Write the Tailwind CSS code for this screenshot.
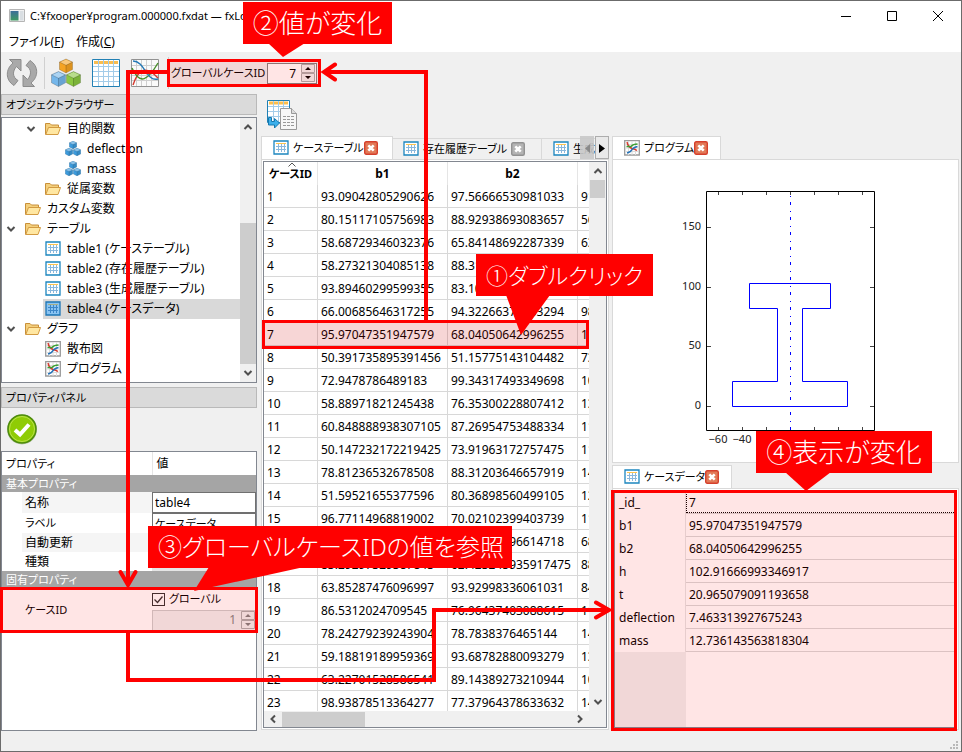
<!DOCTYPE html>
<html lang="ja">
<head>
    <meta charset="UTF-8">
    <meta name="viewport" content="width=device-width, initial-scale=1.0">
    <title>program.000000.fxdat</title>
    <script src="https://cdn.jsdelivr.net/npm/@tailwindcss/browser@4"></script>
</head>
<body class="bg-[#f0f0f0] text-black text-[12px] leading-5 font-['Noto_Sans','Noto_Sans_CJK_JP',sans-serif] [font-feature-settings:'palt'] whitespace-nowrap overflow-hidden">
    <!-- Icon sprites -->
    <svg class="hidden">
        <symbol id="i-folder" viewBox="0 0 16 16">
            <path d="M.5 13.5V2.5H5L6.500 4H13.500V7" fill="#f3cf7c" stroke="#c8903a"/>
            <path d="M.8 13.500 3.500 6.500H15.500L13 13.500Z" fill="#ffe7a2" stroke="#d39b42"/>
        </symbol>
        <symbol id="i-cube" viewBox="0 0 16 16">
            <path d="M8 0 15.500 3.500V12L8 16 .5 12V3.500Z" fill="currentColor"/>
            <path d="M8 .5 15 3.800 8 7.200 1 3.800Z" fill="#fff" opacity=".4"/>
            <path d="M8 7.200V15.500L15 11.800V3.800Z" fill="#000" opacity=".1"/>
            <path d="M8 0 15.500 3.500V12L8 16 .5 12V3.500ZM.5 3.500 8 7.200 15.500 3.500M8 7.200V16" fill="none" stroke="#000" stroke-opacity=".22"/>
        </symbol>
        <symbol id="i-cubes" viewBox="0 0 16 16">
            <g color="#3d9bdc">
                <use href="#i-cube" x="4" y="0" width="8" height="8"/>
                <use href="#i-cube" x="0" y="7" width="8" height="8"/>
                <use href="#i-cube" x="8" y="7" width="8" height="8"/>
            </g>
        </symbol>
        <symbol id="i-table" viewBox="0 0 16 16">
            <path d="M1 1H15V14H1Z" fill="#fff" stroke="#1c86bf" stroke-width="1.300"/>
            <path d="M3 3.500H13" stroke="#ffc44d"/>
            <path d="M3 6.500H13M3 9.500H13M5.500 4V12M8.500 4V12M11.500 4V12" stroke="#8bb8dc" fill="none"/>
        </symbol>
        <symbol id="i-table-on" viewBox="0 0 16 16">
            <path d="M1 1H15V14H1Z" fill="#8ac4f2" stroke="#1c76b5" stroke-width="1.300"/>
            <path d="M3 3.500H13" stroke="#a8ae86"/>
            <path d="M3 6.500H13M3 9.500H13M5.500 4V12M8.500 4V12M11.500 4V12" stroke="#3c86c8" fill="none"/>
        </symbol>
        <symbol id="i-graph" viewBox="0 0 16 16">
            <path d="M.7 .7H15.300V15H.7Z" fill="#fff" stroke="#9a9a9a" stroke-width="1.300"/>
            <path d="M4.500 1V15M8 1V15M11.500 1V15M1 4.500H15M1 8H15M1 11.500H15" stroke="#dcdcdc" fill="none"/>
            <path d="M3 2Q4 7 8 8.500 11 9 13 10.500" stroke="#d83a2e" stroke-width="1.400" fill="none"/>
            <path d="M2.500 6.500H7Q9 4 13.500 4" stroke="#3d9e34" stroke-width="1.400" fill="none"/>
            <path d="M3 13Q7 12 8 9.500 10 7 13.500 6.500" stroke="#2472b8" stroke-width="1.400" fill="none"/>
        </symbol>
        <symbol id="i-close" viewBox="0 0 14 14">
            <rect x=".7" y=".7" width="12.600" height="12.600" rx="1.500" fill="#e27a58" stroke="#d5402c" stroke-width="1.400"/>
            <path d="M4.300 4.300 9.700 9.700M9.700 4.300 4.300 9.700" stroke="#fff" stroke-width="2.600"/>
        </symbol>
        <symbol id="i-close-off" viewBox="0 0 14 14">
            <rect x=".7" y=".7" width="12.600" height="12.600" rx="1.500" fill="#b4b4b4" stroke="#929292" stroke-width="1.400"/>
            <path d="M4.300 4.300 9.700 9.700M9.700 4.300 4.300 9.700" stroke="#fff" stroke-width="2.600"/>
        </symbol>
        <symbol id="i-down" viewBox="0 0 10 10"><path d="M1.500 3 5 6.500 8.500 3" fill="none" stroke="#505050" stroke-width="2"/></symbol>
        <symbol id="i-up" viewBox="0 0 10 10"><path d="M1.500 7 5 3.500 8.500 7" fill="none" stroke="#505050" stroke-width="2"/></symbol>
        <symbol id="i-left" viewBox="0 0 10 10"><path d="M7 1.500 3.500 5 7 8.500" fill="none" stroke="#505050" stroke-width="2"/></symbol>
        <symbol id="i-right" viewBox="0 0 10 10"><path d="M3 1.500 6.500 5 3 8.500" fill="none" stroke="#505050" stroke-width="2"/></symbol>
        <symbol id="i-spin" viewBox="0 0 14 18">
            <path d="M.5 .5H13.500V8.500H.5ZM.5 9.500H13.500V17.500H.5Z" fill="#f0f0f0" stroke="#acacac"/>
            <path d="M4 6 7 3 10 6ZM4 12 7 15 10 12Z" fill="currentColor"/>
        </symbol>
    </svg>

    <div class="relative h-screen min-h-[752px] flex flex-col border border-[#6b6b6b]">
        <!-- Title bar -->
        <header class="h-[29px] shrink-0 bg-white flex items-center pl-2">
            <svg class="w-4 h-4 mr-[5px]" viewBox="0 0 16 16">
                <defs><linearGradient id="app" x2="0" y2="1"><stop stop-color="#3d6f9a"/><stop offset="1" stop-color="#3f9a62"/></linearGradient></defs>
                <path d="M.5 1.500H15.500V13.500H.5Z" fill="#f2f2f2" stroke="#b5b5b5"/>
                <path d="M1.500 3H9.500V12.500H1.500Z" fill="url(#app)"/>
                <path d="M11 3H14.500V12.500H11Z" fill="#d9dee2"/>
            </svg>
            <span class="text-[11px]">C:¥fxooper¥program.000000.fxdat — fxLogger</span>
            <div class="ml-auto flex">
                <button aria-label="最小化" class="w-[46px] h-7 flex items-center justify-center"><svg class="w-3 h-3" viewBox="0 0 12 12"><path d="M1 6.500H11" stroke="#000"/></svg></button>
                <button aria-label="最大化" class="w-[46px] h-7 flex items-center justify-center"><svg class="w-3 h-3" viewBox="0 0 12 12"><path d="M1.500 1.500H10.500V10.500H1.500Z" fill="none" stroke="#000"/></svg></button>
                <button aria-label="閉じる" class="w-[46px] h-7 flex items-center justify-center"><svg class="w-3 h-3" viewBox="0 0 12 12"><path d="M1 1 11 11M11 1 1 11" stroke="#000"/></svg></button>
            </div>
        </header>

        <!-- Menu -->
        <nav class="h-[22px] shrink-0 bg-white flex items-center gap-3 px-2 pt-px">
            <button>ファイル(<u>F</u>)</button>
            <button>作成(<u>C</u>)</button>
        </nav>

        <!-- Toolbar -->
        <div class="h-[42px] shrink-0 flex items-center pl-1">
            <button aria-label="更新" class="w-9 pl-px">
                <svg class="w-8 h-8" viewBox="0 0 32 32" fill="#a9a9a9" stroke="#8c8c8c">
                    <path d="M15 2.500H3.500L7 6C-.5 12-1 23 8 28.500L12 23.500C6 20 6.500 14 10.500 9.500L15 14Z"/>
                    <path d="M17 29.500H28.500L25 26C32.500 20 33 9 24 3.500L20 8.500C26 12 25.500 18 21.500 22.500L17 18Z"/>
                </svg>
            </button>
            <span class="w-px h-8 bg-[#d0d0d0] ml-[3px] mr-[6px]"></span>
            <button aria-label="モデル" class="w-8">
                <svg class="w-[30px] h-[30px]" viewBox="0 0 30 30">
                    <use href="#i-cube" x="8" y="0" width="14" height="16" color="#f5a323"/>
                    <use href="#i-cube" x="0" y="13" width="15" height="16" color="#74b6ea"/>
                    <use href="#i-cube" x="15" y="13" width="15" height="16" color="#8ac740"/>
                </svg>
            </button>
            <button aria-label="テーブル" class="w-8 ml-2">
                <svg class="w-[30px] h-[30px]" viewBox="0 0 30 30">
                    <path d="M1.500 1.500H28.500V28.500H1.500Z" fill="#fff" stroke="#2280b4"/>
                    <path d="M3 4.500H27" stroke="#f9bd50" stroke-width="3"/>
                    <path d="M2 8.500H28M2 13.500H28M2 18.500H28M2 23.500H28M7.500 2V28M12.500 2V28M17.500 2V28M22.500 2V28" fill="none" stroke="#a3cce9"/>
                </svg>
            </button>
            <button aria-label="グラフ" class="w-8 ml-[7px]">
                <svg class="w-[30px] h-[30px]" viewBox="0 0 30 30">
                    <path d="M1.500 1.500H28.500V28.500H1.500Z" fill="#fafafa" stroke="#929292"/>
                    <path d="M2 7.500H28M2 12.500H28M2 17.500H28M2 22.500H28M6.500 2V28M11.500 2V28M16.500 2V28M21.500 2V28" fill="none" stroke="#cfcfcf"/>
                    <path d="M3 27C8 12 15 6 28 20" fill="none" stroke="#d4372c" stroke-width="1.400"/>
                    <path d="M2 10C10 28 18 22 28 5" fill="none" stroke="#468e28" stroke-width="1.400"/>
                    <path d="M3 3C15 3 16 24 28 21" fill="none" stroke="#2378b6" stroke-width="1.400"/>
                </svg>
            </button>
            <span class="w-px h-8 bg-[#d0d0d0] ml-[6px] mr-[2px]"></span>
            <label for="gid" class="w-24 text-[11px]">グローバルケースID</label>
            <div class="w-[50px] h-[21px] flex items-center border border-[#808080] bg-white">
                <input id="gid" value="7" class="w-7 h-full text-right bg-transparent outline-none">
                <svg class="w-[14px] h-[18px] ml-[5px]" viewBox="0 0 14 18"><use href="#i-spin"/></svg>
            </div>
        </div>

        <main class="flex-1 min-h-0 flex">
            <!-- Left docks -->
            <aside class="w-64 shrink-0 flex flex-col pb-5">
                <h2 class="h-[21px] shrink-0 border border-[#b9b9b9] bg-[#dadada] pl-1 leading-5 text-[11px]">オブジェクトブラウザー</h2>
                <div class="h-[266px] shrink-0 mt-[2px] border border-[#828790] bg-white flex">
                    <ul id="tree" class="flex-1 min-w-0 pt-px"></ul>
                    <div class="w-4 bg-[#f0f0f0] flex flex-col items-center">
                        <svg class="w-[10px] h-[10px] my-1 shrink-0"><use href="#i-up"/></svg>
                        <span class="w-full h-[141px] bg-[#cdcdcd] mt-auto"></span>
                        <svg class="w-[10px] h-[10px] my-1 shrink-0"><use href="#i-down"/></svg>
                    </div>
                </div>

                <h2 class="h-[21px] shrink-0 mt-1 border border-[#b9b9b9] bg-[#dadada] pl-1 leading-5 text-[11px]">プロパティパネル</h2>
                <div class="h-[43px] shrink-0 flex items-center pl-[5px] pb-[2px]">
                    <button aria-label="適用">
                        <svg class="w-8 h-8" viewBox="0 0 32 32">
                            <circle cx="16" cy="16.500" r="15" fill="#b9c4ac"/>
                            <circle cx="16" cy="16" r="14" fill="#8fcc05" stroke="#4e8c0c" stroke-width="1.500"/>
                            <circle cx="16" cy="16" r="12.500" fill="none" stroke="#b9e24b"/>
                            <path d="M9 17 14 21.500 23 11.500" fill="none" stroke="#fff" stroke-width="4"/>
                        </svg>
                    </button>
                </div>
                <div class="flex-1 border border-[#828790] bg-white">
                    <table class="w-full table-fixed border-collapse text-left">
                        <colgroup><col class="w-5"><col class="w-[130px]"><col></colgroup>
                        <thead>
                            <tr class="h-[23px]"><th colspan="2" class="font-normal p-0 pl-1 text-[11px]">プロパティ</th><th class="font-normal p-0 pl-1 border-l border-[#e5e5e5]">値</th></tr>
                        </thead>
                        <tbody class="leading-4">
                            <tr class="h-[17px] bg-[#a5a5a5] text-white"><td colspan="3" class="p-0 pl-1 text-[11px]">基本プロパティ</td></tr>
                            <tr class="h-[21px]"><td></td><td class="p-0 pl-[3px] bg-[#f5f5f5]"><label for="pname">名称</label></td><td class="p-0"><input id="pname" value="table4" class="block w-full h-[21px] border border-[#707070] px-[2px] outline-none"></td></tr>
                            <tr class="h-[20px]"><td></td><td class="p-0 pl-[3px] text-[11px]"><label for="plabel">ラベル</label></td><td class="p-0"><input id="plabel" value="ケースデータ" class="block w-full h-5 border border-[#707070] px-[2px] text-[11px] outline-none"></td></tr>
                            <tr class="h-[19px]"><td></td><td class="p-0 pl-[3px] bg-[#f5f5f5]">自動更新</td><td class="p-0"></td></tr>
                            <tr class="h-[19px]"><td></td><td class="p-0 pl-[3px]">種類</td><td class="p-0 bg-[#e5e5e5]"></td></tr>
                            <tr class="h-[17px] bg-[#a5a5a5] text-white"><td colspan="3" class="p-0 pl-1 text-[11px]">固有プロパティ</td></tr>
                            <tr class="h-[43px]">
                                <td></td>
                                <td class="p-0 pl-[3px] text-[11px]"><label for="cid">ケースID</label></td>
                                <td class="p-0">
                                    <label class="flex items-center gap-1 h-[21px] text-[11px]">
                                        <input type="checkbox" checked class="peer appearance-none w-[13px] h-[13px] border border-[#333] bg-white">
                                        <svg class="w-[13px] h-[13px] -ml-[17px]" viewBox="0 0 13 13"><path d="M2.500 6.500 5.500 9.500 10.500 3.500" fill="none" stroke="#333" stroke-width="1.300"/></svg>
                                        グローバル
                                    </label>
                                    <div class="h-[21px] flex items-center border border-[#ccc] bg-[#f0f0f0]">
                                        <input id="cid" value="1" disabled class="flex-1 min-w-0 text-right text-[#838383] outline-none">
                                        <svg class="w-[14px] h-[18px] ml-[5px] text-[#808080]" viewBox="0 0 14 18"><use href="#i-spin"/></svg>
                                    </div>
                                </td>
                            </tr>
                        </tbody>
                    </table>
                </div>
            </aside>

            <div class="flex-1 min-w-0 flex flex-col pl-1 pr-[2px] pb-[21px]">
                <div class="h-[42px] shrink-0 flex items-center pl-[5px]">
                    <button aria-label="エクスポート">
                        <svg class="w-8 h-8" viewBox="0 0 32 32">
                            <path d="M1.500 1.500H23.500V23.500H1.500Z" fill="#fff" stroke="#1f80b4"/>
                            <path d="M3 4H22" stroke="#fcbf4b" stroke-width="3"/>
                            <path d="M2 7.500H23M2 12.500H23M2 17.500H23M7.500 2V23M12.500 2V23M17.500 2V23" fill="none" stroke="#a3cce9"/>
                            <path d="M14.500 9.500H25.500L30.500 14.500V30.500H14.500Z" fill="#f7f7f7" stroke="#999"/>
                            <path d="M25.500 9.500V14.500H30.500" fill="#ddd" stroke="#999"/>
                            <path d="M17 17.500H28M17 20.500H28M17 23.500H28M17 26.500H28" stroke="#999" stroke-dasharray="3 1"/>
                            <path d="M2.500 18.500H5.500V22.500H8.500V19.500L13.500 24 8.500 29V26H2.500Z" fill="#3cb0ec" stroke="#1678ae"/>
                        </svg>
                    </button>
                </div>
                <div class="flex-1 min-h-0 flex gap-[3px]">
                    <!-- Case table -->
                    <section class="w-[348px] shrink-0 flex flex-col">
                        <div class="h-[23px] shrink-0 flex overflow-hidden relative">
                            <div class="w-[132px] h-full shrink-0 flex items-center bg-white border border-b-0 border-[#d9d9d9] pl-[11px]">
                                <svg class="w-4 h-4 mr-1"><use href="#i-table"/></svg>
                                <button class="text-[11px]">ケーステーブル</button>
                                <button aria-label="閉じる"><svg class="w-[14px] h-[14px]"><use href="#i-close"/></svg></button>
                            </div>
                            <div class="w-[149px] h-[21px] mt-[2px] shrink-0 flex items-center border-t border-r border-[#d9d9d9] pl-[10px]">
                                <svg class="w-4 h-4 mr-1"><use href="#i-table"/></svg>
                                <button class="text-[11px]">存在履歴テーブル</button>
                                <button aria-label="閉じる" class="ml-1"><svg class="w-[14px] h-[14px]"><use href="#i-close-off"/></svg></button>
                            </div>
                            <div class="h-[21px] mt-[2px] flex items-center border-t border-[#d9d9d9] pl-[11px]">
                                <svg class="w-4 h-4 mr-1 shrink-0"><use href="#i-table"/></svg>
                                <button class="text-[11px]">生成</button>
                            </div>
                            <div class="absolute right-0 top-0 flex h-[23px]">
                                <button aria-label="前へ" class="w-[14px] bg-[#c8c8c8]/90"><svg class="w-[14px] h-[14px]" viewBox="0 0 14 14"><path d="M10 3V12L5 7.500Z" fill="#8a8a8a"/></svg></button>
                                <button aria-label="次へ" class="w-[14px] border border-[#adadad] bg-[#e9e9e9] ml-px"><svg class="w-3 h-[14px]" viewBox="0 0 12 14"><path d="M3 3V12L9 7.500Z"/></svg></button>
                            </div>
                        </div>
                        <div class="flex-1 min-h-0 border border-[#d9d9d9] bg-white p-px">
                            <div class="h-full border border-[#828790] grid grid-cols-[1fr_17px] grid-rows-[1fr_16px] bg-[#f0f0f0]">
                                <div class="bg-white overflow-hidden min-h-0 min-w-0">
                                    <table class="w-[444px] table-fixed border-separate border-spacing-0">
                                        <colgroup><col class="w-[54px]"><col class="w-[130px]"><col class="w-[130px]"><col class="w-[130px]"></colgroup>
                                        <thead>
                                            <tr class="h-[23px]">
                                                <th class="relative p-0 border-r border-[#e5e5e5] text-[11px]">ケースID<svg class="absolute top-0 left-6 w-2 h-[5px]" viewBox="0 0 8 5"><path d="M.5 4.500 4 1 7.500 4.500" fill="none" stroke="#555"/></svg></th>
                                                <th class="p-0 border-r border-[#e5e5e5]">b1</th>
                                                <th class="p-0 border-r border-[#e5e5e5]">b2</th>
                                                <th class="p-0 border-r border-[#e5e5e5]">h</th>
                                            </tr>
                                        </thead>
                                        <tbody id="cases"></tbody>
                                    </table>
                                </div>
                                <div class="flex flex-col items-center">
                                    <svg class="w-[10px] h-[10px] my-1 shrink-0"><use href="#i-up"/></svg>
                                    <span class="w-[15px] h-[18px] bg-[#cdcdcd]"></span>
                                    <svg class="w-[10px] h-[10px] mt-auto mb-1 shrink-0"><use href="#i-down"/></svg>
                                </div>
                                <div class="flex items-center">
                                    <svg class="w-[10px] h-[10px] mx-1 shrink-0"><use href="#i-left"/></svg>
                                    <span class="w-[83px] h-[15px] bg-[#cdcdcd]"></span>
                                    <svg class="w-[10px] h-[10px] ml-auto mr-1 shrink-0"><use href="#i-right"/></svg>
                                </div>
                            </div>
                        </div>
                    </section>

                    <!-- Plot and case data -->
                    <section class="flex-1 min-w-0 flex flex-col">
                        <div class="w-[109px] h-[23px] shrink-0 flex items-center bg-white border border-b-0 border-[#d9d9d9] pl-[11px]">
                            <svg class="w-4 h-4 mr-1"><use href="#i-graph"/></svg>
                            <button class="text-[11px]">プログラム</button>
                            <button aria-label="閉じる"><svg class="w-[14px] h-[14px]"><use href="#i-close"/></svg></button>
                        </div>
                        <div class="h-[304px] shrink-0 border border-[#d9d9d9] bg-white flex justify-center">
                            <svg class="w-[344px] h-[302px]" viewBox="614 160 344 302" font-size="11">
                                <path d="M706.500 191.500H874.500V430.500H706.500Z" fill="none" stroke="#000"/>
                                <path d="M718.500 192v3M742.500 192v3M766.500 192v3M790.500 192v3M814.500 192v3M838.500 192v3M862.500 192v3M718.500 430v-3M742.500 430v-3M766.500 430v-3M790.500 430v-3M814.500 430v-3M838.500 430v-3M862.500 430v-3M707 227.500h4M707 287.500h4M707 346.500h4M707 406.500h4M874 227.500h-4M874 287.500h-4M874 346.500h-4M874 406.500h-4" stroke="#444"/>
                                <path d="M790.500 430V192" fill="none" stroke="#0000ff" stroke-dasharray="3 5 1 6"/>
                                <path d="M732.500 406.500H847.500V381.500H802.500V308.500H830.500V283.500H749.500V308.500H777.500V381.500H732.500Z" fill="none" stroke="#00f"/>
                                <g text-anchor="end" fill="#222">
                                    <text x="701" y="230">150</text>
                                    <text x="701" y="290">100</text>
                                    <text x="701" y="349">50</text>
                                    <text x="701" y="409">0</text>
                                </g>
                                <g text-anchor="middle" fill="#222">
                                    <text x="718" y="443">−60</text>
                                    <text x="742" y="443">−40</text>
                                </g>
                            </svg>
                        </div>
                        <div class="w-[120px] h-[23px] shrink-0 mt-[2px] flex items-center bg-white border border-b-0 border-[#d9d9d9] pl-[11px]">
                            <svg class="w-4 h-4 mr-1"><use href="#i-table"/></svg>
                            <button class="text-[11px]">ケースデータ</button>
                            <button aria-label="閉じる"><svg class="w-[14px] h-[14px]"><use href="#i-close"/></svg></button>
                        </div>
                        <div class="flex-1 min-h-0 border border-[#d9d9d9] bg-white p-px">
                            <div class="h-full border border-[#828790] flex flex-col">
                                <table class="w-full table-fixed border-separate border-spacing-0 text-left">
                                    <colgroup><col class="w-[71px]"><col></colgroup>
                                    <tbody id="detail"></tbody>
                                </table>
                                <span class="w-[71px] flex-1 bg-[#f0f0f0]"></span>
                            </div>
                        </div>
                    </section>
                </div>
            </div>
        </main>

        <svg class="absolute right-[3px] bottom-[2px] w-2 h-2" viewBox="0 0 8 8"><path d="M6 0h2v2h-2zM3 3h2v2h-2zM6 3h2v2h-2zM0 6h2v2h-2zM3 6h2v2h-2zM6 6h2v2h-2z" fill="#b8b8b8"/></svg>
    </div>

    <!-- Annotations -->
    <svg class="absolute top-0 left-0 w-[962px] h-[752px] pointer-events-none" viewBox="0 0 962 752">
        <g fill="#f00" fill-opacity=".1" stroke="#f00" stroke-width="3">
            <rect x="168.500" y="60.500" width="151" height="25"/>
            <rect x="1.500" y="588.500" width="255" height="43"/>
            <rect x="612.500" y="491.500" width="343" height="238"/>
        </g>
        <rect x="263.500" y="321.500" width="324" height="26" fill="#c00" fill-opacity=".16" stroke="#f00" stroke-width="3"/>
        <g fill="none" stroke="#f00" stroke-width="4">
            <path d="M426 321V72H324"/>
            <path d="M168 72H128V584"/>
            <path d="M128 632V680H434V610H608"/>
            <path d="M335 64.500 324 72 335 79.500M120.500 572 128 585 135.500 572M596 602.500 609 610 596 617.500" stroke-linecap="round"/>
        </g>
        <g fill="#f00">
            <path d="M268 43H305L283 57Z"/>
            <path d="M506 295H550L521 335Z"/>
            <path d="M209 567H304L194 591Z"/>
            <path d="M785 472H831L806 491Z"/>
        </g>
    </svg>
    <div class="absolute left-[243px] top-[2px] w-[149px] h-[42px] flex items-center justify-center bg-[#f00] text-white text-[26px] font-light">②値が変化</div>
    <div class="absolute left-[476px] top-[254px] w-[177px] h-[42px] flex items-center justify-center bg-[#f00] text-white text-[22px] font-light">①ダブルクリック</div>
    <div class="absolute left-[148px] top-[526px] w-[364px] h-[42px] flex items-center pl-[10px] bg-[#f00] text-white text-[24px] font-light">③グローバルケースIDの値を参照</div>
    <div class="absolute left-[756px] top-[431px] w-[176px] h-[42px] flex items-center justify-center bg-[#f00] text-white text-[26px] font-light">④表示が変化</div>

    <script>
        // Object browser: level, icon, label, expanded
        const tree = [
            [1, 'folder', '目的関数', true],
            [2, 'cubes', 'deflection'],
            [2, 'cubes', 'mass'],
            [1, 'folder', '従属変数'],
            [0, 'folder', 'カスタム変数'],
            [0, 'folder', 'テーブル', true],
            [1, 'table', 'table1 (ケーステーブル)'],
            [1, 'table', 'table2 (存在履歴テーブル)'],
            [1, 'table', 'table3 (生成履歴テーブル)'],
            [1, 'table-on', 'table4 (ケースデータ)'],
            [0, 'folder', 'グラフ', true],
            [1, 'graph', '散布図'],
            [1, 'graph', 'プログラム']
        ];
        const indent = ['pl-[4px]', 'pl-[24px]', 'pl-[44px]'];
        document.getElementById('tree').innerHTML = tree.map(([level, icon, label, open]) => `
            <li class="h-5 flex items-center ${indent[level]}">
                <span class="w-[17px] shrink-0">${open ? '<svg class="w-[10px] h-[10px]"><use href="#i-down"/></svg>' : ''}</span>
                <span class="flex-1 h-full flex items-center pl-[2px] ${icon === 'table-on' ? 'bg-[#d9d9d9]' : ''}">
                    <svg class="w-4 h-4 mr-[6px] shrink-0"><use href="#i-${icon}"/></svg>${label}
                </span>
            </li>`).join('');

        const cases = [
            ['93.09042805290626', '97.56666530981033', '91.42'],
            ['80.15117105756983', '88.92938693083657', '56.10'],
            ['58.68729346032376', '65.84148692287339', '63.75'],
            ['58.27321304085138', '88.31820467325114', '71.08'],
            ['93.89460299599355', '83.10947255863021', '10.66'],
            ['66.00685646317255', '94.32266371253294', '98.21'],
            ['95.97047351947579', '68.04050642996255', '102.91666993346917'],
            ['50.391735895391456', '51.15775143104482', '73.16'],
            ['72.9478786489183', '99.34317493349698', '106.02'],
            ['58.88971821245438', '76.35300228807412', '135.38'],
            ['60.848888938307105', '87.26954753488334', '117.90'],
            ['50.147232172219425', '73.91963172757475', '111.25'],
            ['78.81236532678508', '88.31203646657919', '146.70'],
            ['51.59521655377596', '80.36898560499105', '121.14'],
            ['96.77114968819002', '70.02102399403739', '113.68'],
            ['71.40582216934471', '81.20735096614718', '68.33'],
            ['83.29297329387843', '62.423245935917475', '88.51'],
            ['63.85287476096997', '93.92998336061031', '84.09'],
            ['86.5312024709545', '76.96437403088615', '117.47'],
            ['78.24279239243904', '78.7838376465144', '144.82'],
            ['59.18819189959369', '93.68782880093279', '135.60'],
            ['63.22701528586541', '89.14389273210944', '106.95'],
            ['98.93878513364277', '77.37964378633632', '143.11']
        ];
        document.getElementById('cases').innerHTML = cases.map((row, i) => `
            <tr class="h-[23px]">
                ${[i + 1, ...row].map(v => `<td class="p-0 pt-[2px] pl-[3px] border-r border-b border-[#d8d8d8] overflow-hidden">${v}</td>`).join('')}
            </tr>`).join('');

        // Values of the selected case
        const detail = [
            ['_id_', '7'],
            ['b1', '95.97047351947579'],
            ['b2', '68.04050642996255'],
            ['h', '102.91666993346917'],
            ['t', '20.965079091193658'],
            ['deflection', '7.463313927675243'],
            ['mass', '12.736143563818304']
        ];
        document.getElementById('detail').innerHTML = detail.map(([name, value], i) => `
            <tr class="h-[23px]">
                <th class="p-0 pl-1 font-normal border-r border-[#e5e5e5]">${name}</th>
                <td class="p-0 border-b border-[#d8d8d8]"><div class="h-[22px] leading-[22px] pl-[2px] border border-dotted ${i === 0 ? 'border-black' : 'border-transparent'}">${value}</div></td>
            </tr>`).join('');
    </script>
</body>
</html>
